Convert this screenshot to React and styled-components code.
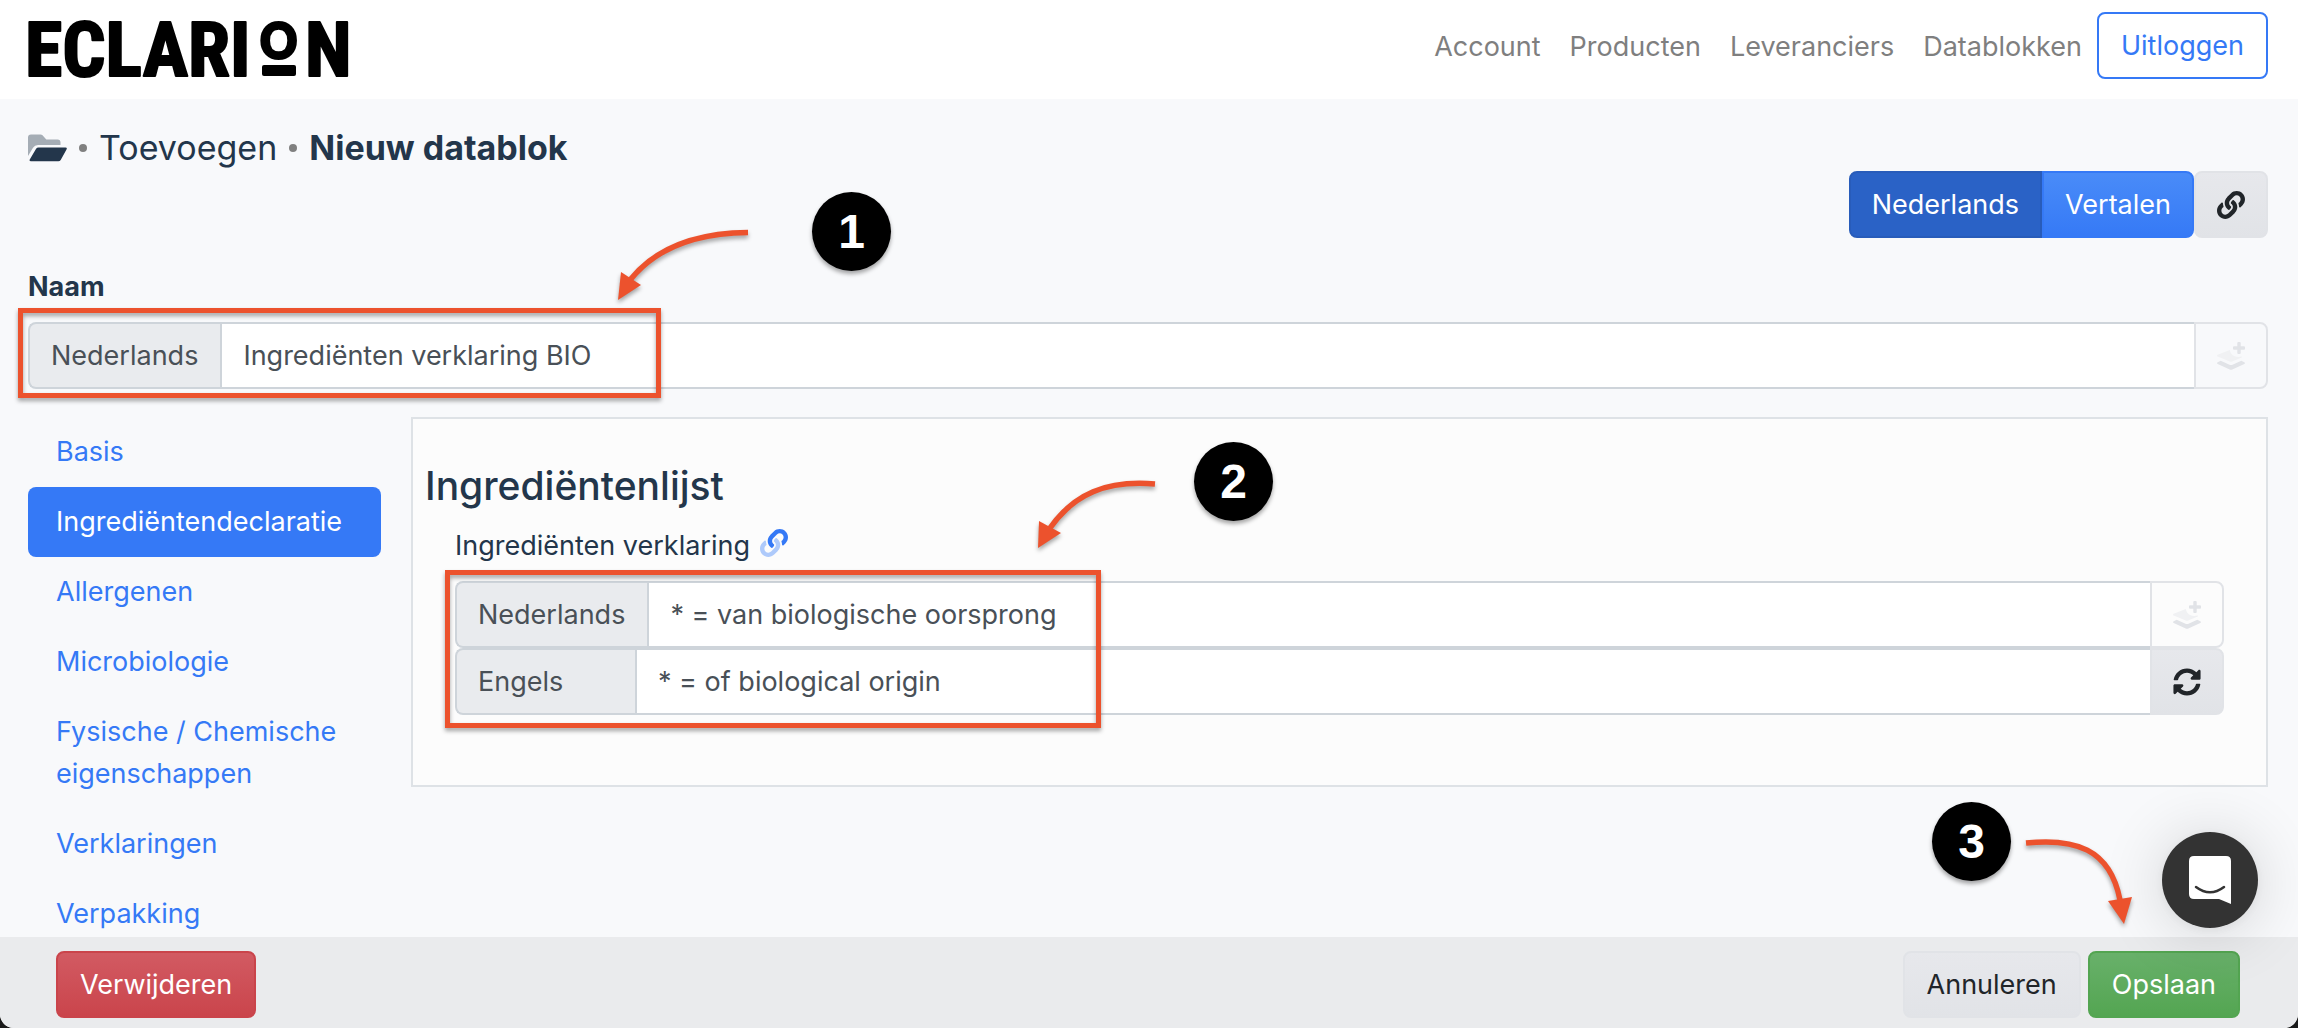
import React from 'react';
import styled, { createGlobalStyle } from 'styled-components';
import { FaSyncAlt } from 'react-icons/fa';

const GlobalStyle = createGlobalStyle`
    * {
        box-sizing: border-box;
    }

    body {
        margin: 0;
        background: #1a1a1a;
        color: #23364b;
        font-family: Inter, "Liberation Sans", sans-serif;
        font-size: 27px;
        line-height: 42px;
    }

    button,
    input {
        font: inherit;
    }
`;

const Page = styled.div`
    position: relative;
    min-height: 100vh;
    background: #f8f9fb;
    border-radius: 0 0 14px 14px;
    overflow: hidden;
`;

const Header = styled.header`
    display: flex;
    justify-content: space-between;
    align-items: flex-start;
    padding: 0 30px 0 20px;
    background: #fff;
`;

const Logo = styled.svg`
    display: block;
    width: 350px;
    height: 99px;
    font-family: "Roboto Condensed", "Liberation Sans Narrow", "Liberation Sans", sans-serif;
    font-weight: bold;
    font-size: 76px;
`;

const LogoRound = styled.text`
    font-family: Inter, "Liberation Sans", sans-serif;
    font-size: 51px;
`;

const Menu = styled.nav`
    display: flex;
    align-items: center;
    gap: 1px;
    margin-top: 12px;
`;

const MenuLink = styled.a`
    padding: 2px 14px 0;
    color: #7f7f7f;
    text-decoration: none;
`;

const Button = styled.button`
    display: inline-flex;
    align-items: center;
    justify-content: center;
    height: 67px;
    padding: 0 22px;
    border: 2px solid ${(props) => props.$border};
    border-radius: 8px;
    background: ${(props) => props.$bg};
    background-origin: border-box;
    color: ${(props) => props.$color || '#fff'};
    cursor: pointer;
`;

const Main = styled.main`
    padding: 28px 30px 70px 28px;
`;

const Breadcrumb = styled.nav`
    display: flex;
    align-items: center;
    gap: 12px;
    height: 42px;
    margin-bottom: 2px;
    font-size: 34px;
`;

const Crumb = styled.a`
    color: inherit;
    font-weight: ${(props) => (props.$current ? 700 : 400)};
    text-decoration: none;
`;

const Dot = styled.span`
    width: 8px;
    height: 8px;
    border-radius: 50%;
    background: #808080;
`;

const Toolbar = styled.div`
    display: flex;
    justify-content: flex-end;
`;

const ButtonGroup = styled.div`
    display: flex;

    button {
        padding: 0 21px;
    }

    button:first-child {
        border-radius: 8px 0 0 8px;
    }

    button:last-child {
        border-radius: 0 8px 8px 0;
    }
`;

const IconButton = styled(Button)`
    flex: none;
    width: 74px;
    padding: 0;
    border-radius: ${(props) => (props.$joined ? '0 8px 8px 0' : '8px')};
`;

const NameLabel = styled.label`
    display: block;
    margin: 28px 0 14px;
    font-weight: 700;
`;

const InputGroup = styled.div`
    display: flex;
    height: 67px;
`;

const Addon = styled.label`
    display: flex;
    align-items: center;
    min-width: 180px;
    padding: 0 22px 0 21px;
    border: 2px solid #ced4da;
    border-right: 0;
    border-radius: 8px 0 0 8px;
    background: #e9ebee;
    color: #495057;
`;

const TextInput = styled.input`
    flex: 1;
    min-width: 0;
    padding: 0 21px;
    border: 2px solid #ced4da;
    border-right: 0;
    border-radius: 0;
    background: #fff;
    color: #495057;
    outline: none;
`;

const Columns = styled.div`
    display: grid;
    grid-template-columns: 353px 1fr;
    align-items: start;
    gap: 30px;
    margin-top: 28px;
`;

const Side = styled.nav`
    display: flex;
    flex-direction: column;
`;

const SideLink = styled.a`
    padding: 14px 28px;
    border-radius: 8px;
    background: ${(props) => (props.$active ? '#3579f6' : 'transparent')};
    color: ${(props) => (props.$active ? '#fff' : '#3579f6')};
    text-decoration: none;
`;

const Panel = styled.section`
    padding: 42px 42px 70px 12px;
    border: 2px solid #dee2e6;
    background: #fcfcfc;
`;

const PanelTitle = styled.h2`
    margin: 0 0 14px;
    font-size: 39px;
    font-weight: 500;
    line-height: 50px;
`;

const Fields = styled.div`
    padding-left: 30px;
`;

const FieldTitle = styled.div`
    display: flex;
    align-items: flex-start;
    gap: 10px;
    height: 42px;
    margin-bottom: 14px;

    svg {
        margin-top: 4px;
    }
`;

const Footer = styled.footer`
    position: fixed;
    left: 0;
    right: 0;
    bottom: 0;
    display: flex;
    align-items: flex-start;
    gap: 7px;
    height: 91px;
    padding: 14px 58px 10px 56px;
    border-radius: 0 0 14px 14px;
    background: #eaebed;
`;

const Spacer = styled.div`
    flex: 1;
`;

const Chat = styled.button`
    position: fixed;
    right: 40px;
    bottom: 100px;
    display: flex;
    align-items: center;
    justify-content: center;
    width: 96px;
    height: 96px;
    padding: 0;
    border: 0;
    border-radius: 50%;
    background: #333;
    box-shadow: 0 2px 12px rgba(0, 0, 0, 0.06), 0 4px 64px rgba(0, 0, 0, 0.16);
    cursor: pointer;
`;

const Highlight = styled.div`
    position: absolute;
    left: ${(props) => props.$x}px;
    top: ${(props) => props.$y}px;
    width: ${(props) => props.$w}px;
    height: ${(props) => props.$h}px;
    border: 5px solid #ec522d;
    filter: drop-shadow(0 3px 2px rgba(0, 0, 0, 0.35));
    pointer-events: none;
`;

const Step = styled.div`
    position: absolute;
    left: ${(props) => props.$x}px;
    top: ${(props) => props.$y}px;
    display: flex;
    align-items: center;
    justify-content: center;
    width: 79px;
    height: 79px;
    border-radius: 50%;
    background: #000;
    box-shadow: 0 3px 4px rgba(0, 0, 0, 0.35);
    color: #fff;
    font-family: "Liberation Sans", Arial, sans-serif;
    font-size: 48px;
    font-weight: bold;
`;

const ArrowSvg = styled.svg`
    position: absolute;
    left: ${(props) => props.$x}px;
    top: ${(props) => props.$y}px;
    overflow: visible;
    filter: drop-shadow(0 3px 2px rgba(0, 0, 0, 0.35));
    pointer-events: none;
`;

const Arrow = ({ x, y, line, head }) => (
    <ArrowSvg $x={x} $y={y} width="140" height="90" aria-hidden="true">
        <path d={line} fill="none" stroke="#ec522d" strokeWidth="5.5" />
        <polygon points={head} fill="#ec522d" />
    </ArrowSvg>
);

const LinkIcon = ({ upper = 'currentColor', lower = 'currentColor' }) => (
    <svg width="28" height="28" viewBox="0 0 512 512" aria-hidden="true">
        <path fill={lower} d="M326.612 185.391c59.747 59.809 58.927 155.698.36 214.59-.11.12-.24.25-.36.37l-67.2 67.2c-59.27 59.27-155.699 59.262-214.96 0-59.27-59.26-59.27-155.7 0-214.96l37.106-37.106c9.84-9.84 26.786-3.3 27.294 10.606.648 17.722 3.826 35.527 9.69 52.721 1.986 5.822.567 12.262-3.783 16.612l-13.087 13.087c-28.026 28.026-28.905 73.66-1.155 101.96 28.024 28.579 74.086 28.749 102.325.51l67.2-67.19c28.191-28.191 28.073-73.757 0-101.83-3.701-3.694-7.429-6.564-10.341-8.569a16.037 16.037 0 0 1-6.947-12.606c-.396-10.567 3.348-21.456 11.698-29.806l21.054-21.055c5.521-5.521 14.182-6.199 20.584-1.731a152.482 152.482 0 0 1 20.522 17.197z" />
        <path fill={upper} d="M467.547 44.449c-59.261-59.262-155.69-59.27-214.96 0l-67.2 67.2c-.12.12-.25.25-.36.37-58.566 58.892-59.387 154.781.36 214.59a152.454 152.454 0 0 0 20.521 17.196c6.402 4.468 15.064 3.789 20.584-1.731l21.054-21.055c8.35-8.35 12.094-19.239 11.698-29.806a16.037 16.037 0 0 0-6.947-12.606c-2.912-2.005-6.64-4.875-10.341-8.569-28.073-28.073-28.191-73.639 0-101.83l67.2-67.19c28.239-28.239 74.3-28.069 102.325.51 27.75 28.3 26.872 73.934-1.155 101.96l-13.087 13.087c-4.35 4.35-5.769 10.79-3.783 16.612 5.864 17.194 9.042 34.999 9.69 52.721.509 13.906 17.454 20.446 27.294 10.606l37.106-37.106c59.271-59.259 59.271-155.699.001-214.959z" />
    </svg>
);

const FolderIcon = () => (
    <svg width="39" height="28" viewBox="0 0 39 28" aria-hidden="true">
        <path fill="#a5adb5" d="M0 22V3.500Q0 .5 3 .5h9.500q1.200 0 2 .8l3.800 4.200H29.500q3 0 3 3v2.500H10q-3.300 0-5 2.800z" />
        <path fill="#23364b" d="M10.500 13.500H37.500q2 0 1 1.900l-5.800 10.500q-.8 1.300-2.400 1.300H3q-2.200 0-1.100-1.900l6.200-10.500q.8-1.300 2.400-1.300z" />
    </svg>
);

const LayerPlusIcon = () => (
    <svg width="28" height="28" viewBox="0 0 28 28" aria-hidden="true">
        <path fill="#f0f1f3" d="M.6 12.800 12.800 8q.8 4.600 4.800 6.300 3.200 1.300 7 .3.800.4 0 .8l-9.400 4.100q-1.200.5-2.400 0L.6 14.600q-1.200-.9 0-1.800z" />
        <path fill="#e1e3e7" d="M.7 20.200q-1.400.9 0 1.800l12 5.500q1.300.6 2.600 0l12-5.500q1.400-.9 0-1.800l-3-1.400-8.800 3.900q-1.500.6-3 0l-8.800-3.900z" />
        <path fill="#e1e3e7" d="M20.300 1q0-1 1-1h1.400q1 0 1 1v3.300H27q1 0 1 1v1.400q0 1-1 1h-3.300V11q0 1-1 1h-1.400q-1 0-1-1V7.700H17q-1 0-1-1V5.300q0-1 1-1h3.300z" />
    </svg>
);

const sideItems = [
    "Basis",
    "Ingrediëntendeclaratie",
    "Allergenen",
    "Microbiologie",
    "Fysische / Chemische eigenschappen",
    "Verklaringen",
    "Verpakking",
];

const declarations = [
    { id: "nl", language: "Nederlands", text: "* = van biologische oorsprong" },
    { id: "en", language: "Engels", text: "* = of biological origin" },
];

const blue = 'linear-gradient(#4a8cf8, #3579f6)';
const grey = 'linear-gradient(#e7e8ec, #e1e3e7)';

const App = () => (
    <Page>
        <GlobalStyle />
        <Header>
            <Logo viewBox="0 0 350 99" role="img" aria-label="Eclarion">
                <g stroke="#000" strokeWidth="2" strokeLinejoin="round">
                    <text x="5" y="76">ECLARI</text>
                    <LogoRound x="239" y="59">O</LogoRound>
                    <text x="285" y="76">N</text>
                </g>
                <rect x="242" y="65" width="34" height="11" rx="2" />
            </Logo>
            <Menu>
                <MenuLink href="#account">Account</MenuLink>
                <MenuLink href="#producten">Producten</MenuLink>
                <MenuLink href="#leveranciers">Leveranciers</MenuLink>
                <MenuLink href="#datablokken">Datablokken</MenuLink>
                <Button $bg="#fff" $border="#3579f6" $color="#3579f6">Uitloggen</Button>
            </Menu>
        </Header>

        <Main>
            <Breadcrumb>
                <FolderIcon />
                <Dot />
                <Crumb href="#toevoegen">Toevoegen</Crumb>
                <Dot />
                <Crumb href="#nieuw" $current>Nieuw datablok</Crumb>
            </Breadcrumb>
            <Toolbar>
                <ButtonGroup>
                    <Button $bg="#2a62c6" $border="#285cba">Nederlands</Button>
                    <Button $bg={blue} $border="#3579f6">Vertalen</Button>
                </ButtonGroup>
                <IconButton $bg={grey} $border="#e1e3e7" $color="#212529" aria-label="Koppelen">
                    <LinkIcon />
                </IconButton>
            </Toolbar>

            <NameLabel htmlFor="name">Naam</NameLabel>
            <InputGroup>
                <Addon htmlFor="name">Nederlands</Addon>
                <TextInput id="name" defaultValue="Ingrediënten verklaring BIO" />
                <IconButton $joined $bg="transparent" $border="#e1e3e7" aria-label="Laag toevoegen">
                    <LayerPlusIcon />
                </IconButton>
            </InputGroup>

            <Columns>
                <Side>
                    {sideItems.map((item, idx) => (
                        <SideLink href="#" key={item} $active={idx === 1}>{item}</SideLink>
                    ))}
                </Side>
                <Panel>
                    <PanelTitle>Ingrediëntenlijst</PanelTitle>
                    <Fields>
                        <FieldTitle>
                            Ingrediënten verklaring
                            <LinkIcon upper="#3579f6" lower="#aecafb" />
                        </FieldTitle>
                        {declarations.map(({ id, language, text }) => (
                            <InputGroup key={id}>
                                <Addon htmlFor={id}>{language}</Addon>
                                <TextInput id={id} defaultValue={text} />
                                {id === "nl" ?
                                    <IconButton $joined $bg="transparent" $border="#e1e3e7" aria-label="Laag toevoegen">
                                        <LayerPlusIcon />
                                    </IconButton>
                                    :
                                    <IconButton $joined $bg={grey} $border="#e1e3e7" $color="#212529" aria-label="Vernieuwen">
                                        <FaSyncAlt size={28} />
                                    </IconButton>
                                }
                            </InputGroup>
                        ))}
                    </Fields>
                </Panel>
            </Columns>
        </Main>

        <Footer>
            <Button $bg="linear-gradient(#d25b63, #ca444b)" $border="#ca444b">Verwijderen</Button>
            <Spacer />
            <Button $bg={grey} $border="#e1e3e7" $color="#212529">Annuleren</Button>
            <Button $bg="linear-gradient(#69b16b, #53a551)" $border="#53a551">Opslaan</Button>
        </Footer>

        <Chat aria-label="Chat">
            <svg width="42" height="48" viewBox="0 0 42 48" aria-hidden="true">
                <path fill="#fff" d="M5 0h32q5 0 5 5v43l-12-5H5q-5 0-5-5V5q0-5 5-5z" />
                <path fill="none" stroke="#333" strokeWidth="2.500" strokeLinecap="round" d="M7 31q14 10.500 28 0" />
            </svg>
        </Chat>

        <Highlight $x={18} $y={308} $w={643} $h={90} />
        <Highlight $x={445} $y={570} $w={656} $h={158} />
        <Step $x={812} $y={192}>1</Step>
        <Step $x={1194} $y={442}>2</Step>
        <Step $x={1932} $y={802}>3</Step>
        <Arrow x={618} y={230} line="M130 2.500C76 3 36 20 12 50" head="3,42 23,55 0,70" />
        <Arrow x={1038} y={480} line="M117 4C68 0 36 14 12 48" head="1,41 23,53 0,68" />
        <Arrow x={2026} y={838} line="M0 5C48 0 84 10 94 62" head="82,63 106,59 98,86" />
    </Page>
);

export default App;
